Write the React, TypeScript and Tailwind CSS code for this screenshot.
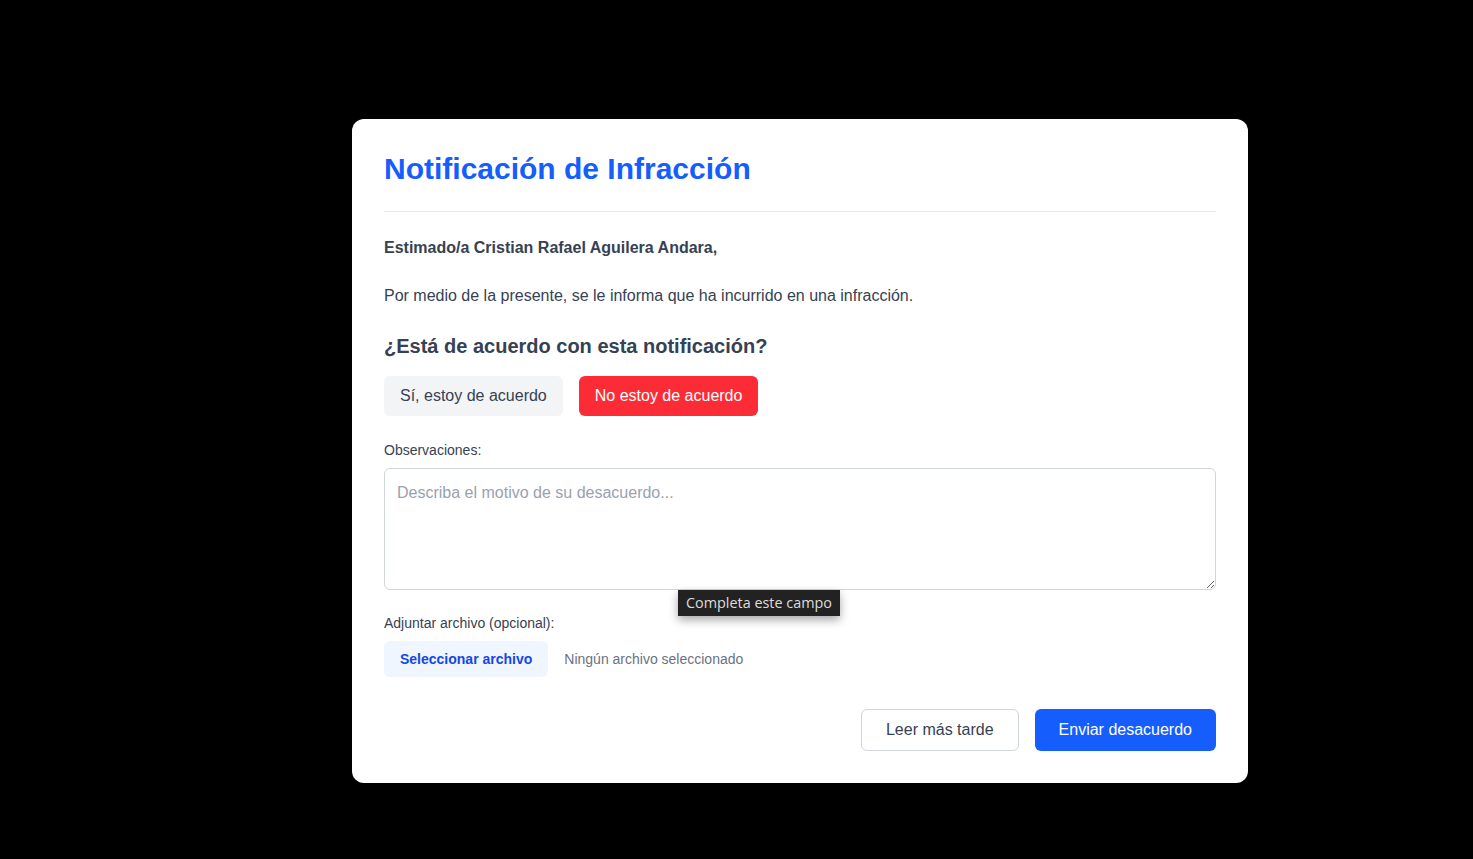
import React from "react";

const recipient = "Cristian Rafael Aguilera Andara";

const App = () => {
  return (
    <div className="min-h-[859px] bg-black pt-[119px] pl-[352px] font-['Liberation_Sans',Arial,sans-serif]">
      {/* Modal */}
      <div className="w-[896px] bg-white rounded-xl p-8">
        {/* Header */}
        <div className="pb-6 border-b border-gray-200">
          <h1 className="text-3xl font-bold text-blue-600">Notificación de Infracción</h1>
        </div>

        {/* Body */}
        <div className="mt-6 text-gray-700">
          <p className="font-bold">Estimado/a {recipient},</p>
          <p className="mt-6">Por medio de la presente, se le informa que ha incurrido en una infracción.</p>
        </div>

        <h2 className="mt-6 text-xl font-semibold text-gray-700">¿Está de acuerdo con esta notificación?</h2>
        <div className="mt-4 flex gap-4">
          <button className="px-4 py-2 rounded-md bg-gray-100 text-gray-700">Sí, estoy de acuerdo</button>
          <button className="px-4 py-2 rounded-md bg-red-500 text-white">No estoy de acuerdo</button>
        </div>

        {/* Observaciones */}
        <label className="mt-6 mb-2 block text-sm text-gray-700">Observaciones:</label>
        <div className="relative">
          <textarea
            rows={4}
            placeholder="Describa el motivo de su desacuerdo..."
            className="block w-full p-3 text-base border border-gray-300 rounded-md placeholder:text-gray-400 outline-none"
          ></textarea>
          {/* validation tooltip */}
          <div className="absolute left-[294px] top-[122px] z-10 bg-[#222] px-2 h-[26px] flex items-center text-[14.4px] text-[#ddd] font-['Open_Sans',sans-serif] shadow-[0_4px_10px_rgba(0,0,0,0.35)]">
            Completa este campo
          </div>
        </div>

        {/* Archivo */}
        <label className="mt-[23px] mb-2 block text-sm text-gray-700">Adjuntar archivo (opcional):</label>
        <div className="flex items-center gap-4">
          <button className="px-4 py-2 rounded-md bg-blue-50 text-blue-700 text-sm font-semibold">Seleccionar archivo</button>
          <span className="text-sm text-gray-500">Ningún archivo seleccionado</span>
        </div>

        {/* Footer */}
        <div className="mt-8 flex justify-end gap-4">
          <button className="px-6 py-2 rounded-md border border-gray-300 bg-white text-gray-700">Leer más tarde</button>
          <button className="px-6 py-[9px] rounded-md bg-blue-600 text-white">Enviar desacuerdo</button>
        </div>
      </div>
    </div>
  );
};

export default App;
